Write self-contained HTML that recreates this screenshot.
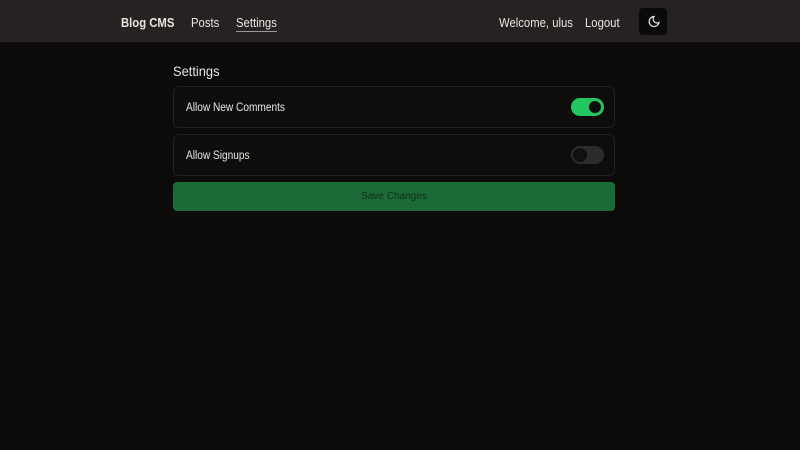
<!DOCTYPE html>
<html><head><meta charset="utf-8"><style>
*{box-sizing:border-box;margin:0;padding:0}
body{width:800px;height:450px;background:#0c0b0a;font-family:"Liberation Sans",sans-serif;color:#e8e6e3;overflow:hidden;position:relative}
.nav{position:absolute;left:0;top:0;width:800px;height:42px;background:#252221}
.nav span{position:absolute;top:15px;font-size:13px;color:#e8e6e3;transform:scaleX(0.87);transform-origin:left;white-space:nowrap}
.card{position:absolute;left:173px;width:442px;height:42px;border:1px solid #242220;border-radius:6px;background:#0e0d0c}
.card span{position:absolute;left:12px;top:15px;font-size:11.5px;transform:scaleX(0.88);transform-origin:left;white-space:nowrap}
.tg{position:absolute;left:397px;top:11px;width:33px;height:18px;border-radius:9px}
.tg i{position:absolute;top:2px;width:14px;height:14px;border-radius:50%;background:#0d0d0d}
</style></head><body>
<div class="nav">
<span style="left:121px;font-weight:bold">Blog CMS</span>
<span style="left:191px">Posts</span>
<span style="left:236px">Settings</span>
<div style="position:absolute;left:236px;top:31px;width:41px;height:1px;background:#999"></div>
<span style="left:499px">Welcome, ulus</span>
<span style="left:585px">Logout</span>
<div style="position:absolute;left:639px;top:8px;width:28px;height:27px;background:#0b0a0a;border-radius:4px">
<svg width="28" height="27" viewBox="0 0 28 27"><path d="M15 8.5a5 5 0 1 0 5 6 4 4 0 0 1-5-6z" fill="none" stroke="#eee" stroke-width="1.2"/></svg>
</div>
</div>
<div style="position:absolute;left:173px;top:63px;font-size:14px;transform:scaleX(0.92);transform-origin:left">Settings</div>
<div class="card" style="top:86px"><span>Allow New Comments</span><div class="tg" style="background:#22c55e"><i style="left:17px;border:1px solid #22c55e"></i></div></div>
<div class="card" style="top:134px"><span>Allow Signups</span><div class="tg" style="background:#2e2c2b"><i style="left:2px;background:#111"></i></div></div>
<div style="position:absolute;left:173px;top:182px;width:442px;height:29px;background:#1c6a36;border-radius:4px;text-align:center;line-height:29px;font-size:10px;color:#0f2d18">Save Changes</div>
</body></html>
